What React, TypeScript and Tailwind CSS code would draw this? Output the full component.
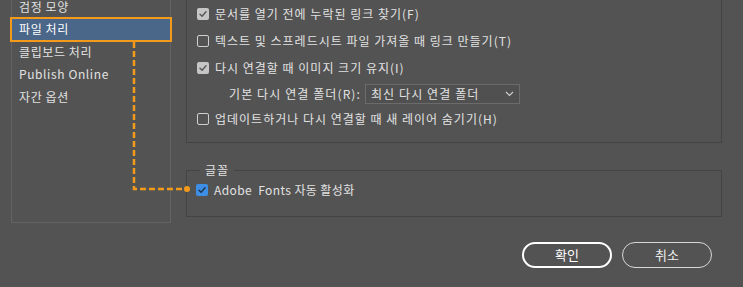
import React from 'react';

const font = { fontFamily: '"Noto Sans CJK KR", "Noto Sans", sans-serif' };

const Check: React.FC<{ checked?: boolean; blue?: boolean }> = ({ checked, blue }) => {
  if (!checked) {
    return <span className="w-[12px] h-[12px] shrink-0 rounded-[2px] border border-[#cfcfcf]" />;
  }
  return (
    <span
      className={`w-[12px] h-[12px] shrink-0 rounded-[2px] flex items-center justify-center ${
        blue ? 'bg-[#3d8fe6]' : 'bg-[#c6c6c6]'
      }`}
    >
      <svg width="10" height="10" viewBox="0 0 10 10">
        <path
          d="M2 5.2 L4.1 7.2 L8 2.8"
          fill="none"
          stroke={blue ? '#1f3550' : '#5a5a5a'}
          strokeWidth="1.5"
          strokeLinecap="round"
          strokeLinejoin="round"
        />
      </svg>
    </span>
  );
};

const Row: React.FC<{ checked?: boolean; label: string; className?: string }> = ({ checked, label, className }) => (
  <div className={`flex items-center gap-[6px] pl-[10px] ${className ?? ''}`}>
    <Check checked={checked} />
    <span className="tracking-[1px]">{label}</span>
  </div>
);

export default function App() {
  const items = ['검정 모양', '파일 처리', '클립보드 처리', 'Publish Online', '자간 옵션'];

  return (
    <div className="relative w-[743px] h-[287px] bg-[#535353] text-[12px] text-[#e2e2e2] overflow-hidden" style={font}>
      <div className="flex">
        {/* left category list */}
        <div className="ml-[11px] w-[160px] h-[223px] border-x border-b border-[#636363]">
          <div className="-mt-[4.5px]">
            {items.map((it, i) => (
              <div
                key={it}
                className={`h-[22.5px] flex items-center pl-[7px] tracking-[0.6px] ${
                  i === 1 ? 'bg-[#4a6688] text-white' : ''
                }`}
              >
                {it}
              </div>
            ))}
          </div>
        </div>

        {/* right options */}
        <div className="ml-[15px] w-[536px] flex flex-col">
          <div className="h-[143px] border-x border-b border-[#444444] flex flex-col">
            <Row checked label="문서를 열기 전에 누락된 링크 찾기(F)" className="h-[27px]" />
            <Row label="텍스트 및 스프레드시트 파일 가져올 때 링크 만들기(T)" className="h-[27px]" />
            <Row checked label="다시 연결할 때 이미지 크기 유지(I)" className="h-[27px]" />
            <div className="h-[25px] flex items-center pl-[42px] gap-[4px]">
              <span className="tracking-[1.1px]">기본 다시 연결 폴더(R):</span>
              <div className="w-[155px] h-[20px] border border-[#6b6b6b] bg-[#505050] flex items-center justify-between px-[5px]">
                <span className="tracking-[1.1px]">최신 다시 연결 폴더</span>
                <svg width="9" height="6" viewBox="0 0 9 6">
                  <path d="M1 1 L4.5 4.5 L8 1" fill="none" stroke="#d0d0d0" strokeWidth="1.1" />
                </svg>
              </div>
            </div>
            <Row label="업데이트하거나 다시 연결할 때 새 레이어 숨기기(H)" className="h-[25px]" />
          </div>

          <fieldset className="mt-[20px] h-[54px] border border-[#444444] px-[9px] min-w-0">
            <legend className="px-[5px] ml-[4px] leading-[14px] tracking-[1px]">글꼴</legend>
            <div className="flex items-center gap-[6px] mt-[4px]">
              <Check checked blue />
              <span className="tracking-[0.4px]">Adobe&nbsp; Fonts 자동 활성화</span>
            </div>
          </fieldset>

          <div className="flex justify-end gap-[10px] mt-[25px] pr-[10px] text-[13px]">
            <button className="w-[90px] h-[26px] rounded-full border-2 border-white text-white">확인</button>
            <button className="w-[90px] h-[26px] rounded-full border border-[#d8d8d8] text-[#eeeeee]">취소</button>
          </div>
        </div>
      </div>

      {/* callout: highlight box and dashed leader */}
      <div className="absolute left-[10px] top-[17px] w-[162px] h-[25px] border-2 border-[#f39a1b] pointer-events-none" />
      <svg className="absolute left-0 top-0 pointer-events-none" width="743" height="287">
        <path d="M134 42 V189 H186" fill="none" stroke="#f39a1b" strokeWidth="2.5" strokeDasharray="6 3" />
        <circle cx="187" cy="189" r="3" fill="#f39a1b" />
      </svg>
    </div>
  );
}
